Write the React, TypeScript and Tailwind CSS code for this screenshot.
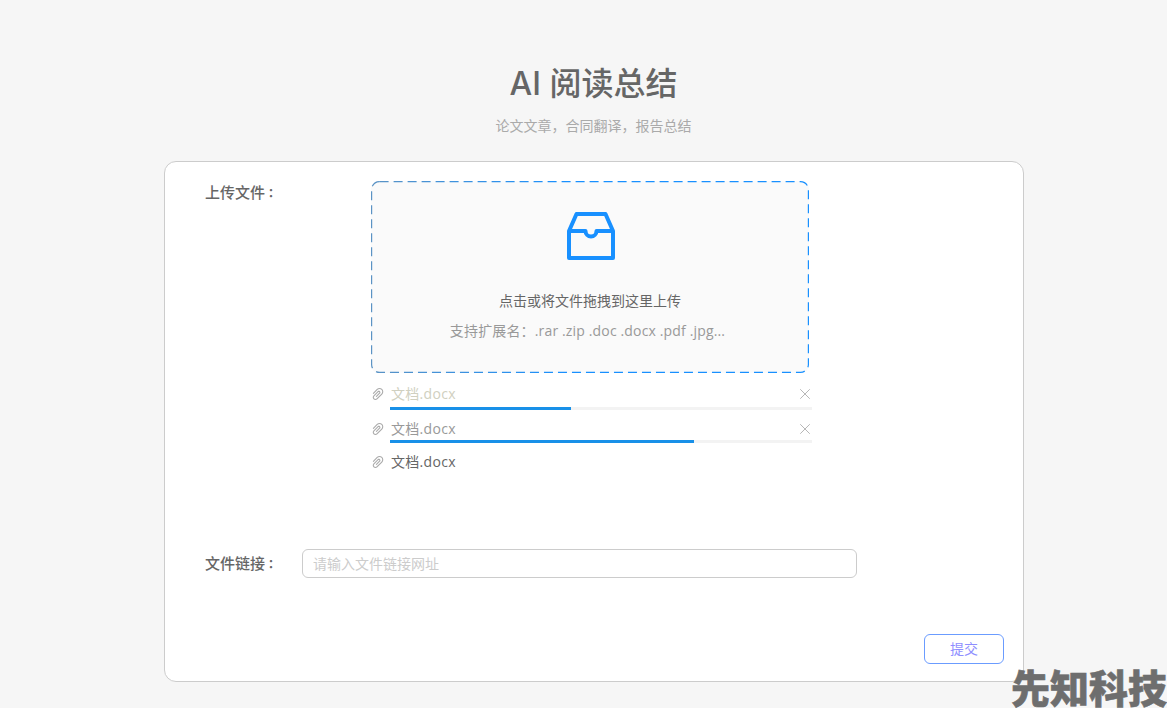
import { X } from "lucide-react";

function ClipIcon() {
  return (
    <svg viewBox="64 64 896 896" className="w-3.5 h-3.5 text-[#aaaaaa] shrink-0" fill="currentColor">
      <path d="M779.3 196.6c-94.2-94.2-247.6-94.2-341.7 0l-261 260.8c-1.7 1.7-2.6 4-2.6 6.4s.9 4.7 2.6 6.4l36.9 36.9a9 9 0 0012.7 0l261-260.8c32.4-32.4 75.5-50.2 121.3-50.2s88.9 17.8 121.2 50.2c32.4 32.4 50.2 75.5 50.2 121.2 0 45.8-17.8 88.8-50.2 121.2l-266 265.9-43.1 43.1c-40.3 40.3-105.8 40.3-146.1 0-19.5-19.5-30.2-45.4-30.2-73s10.7-53.5 30.2-73l263.9-263.8c6.7-6.6 15.5-10.3 24.9-10.3h.1c9.4 0 18.1 3.7 24.7 10.3 6.7 6.7 10.3 15.5 10.3 24.9 0 9.3-3.7 18.1-10.3 24.7L372.4 653c-1.7 1.7-2.6 4-2.6 6.4s.9 4.7 2.6 6.4l36.9 36.9a9 9 0 0012.7 0l215.6-215.6c19.9-19.9 30.8-46.3 30.8-74.4s-11-54.6-30.8-74.4c-41.1-41.1-107.9-41-149 0L463 364 224.8 602.1A172.22 172.22 0 00174 724.8c0 46.3 18.1 89.8 50.8 122.5 33.9 33.8 78.3 50.7 122.7 50.7 44.4 0 88.8-16.9 122.6-50.7l309.2-309C824.8 492.7 850 432 850 367.5c.1-64.6-25.1-125.3-70.7-170.9z" />
    </svg>
  );
}

function InboxIcon() {
  return (
    <svg viewBox="0 0 48 48" className="w-12 h-12 ml-[2px] text-[#1890ff]" fill="none" stroke="currentColor" strokeWidth="4" strokeLinejoin="round">
      <path d="M9.5 2h29L46 19v27H2V19z" />
      <path d="M2 19h16.5a5.5 5.5 0 0 0 11 0H46" />
    </svg>
  );
}

// dashed outline of the drop zone, css dashed can't give these dash lengths
function DashedOutline() {
  return (
    <svg className="absolute inset-0 w-full h-full" fill="none">
      <defs>
        <linearGradient id="dash" x1="0" y1="0" x2="1" y2="0">
          <stop offset="0" stopColor="#5b93c4" />
          <stop offset="0.45" stopColor="#1890ff" />
          <stop offset="1" stopColor="#1890ff" />
        </linearGradient>
      </defs>
      <rect x="0.6" y="0.6" width="436.8" height="190.8" rx="8" stroke="url(#dash)" strokeWidth="1.2" strokeDasharray="9 5" />
    </svg>
  );
}

function FileRow({ color, progress, barGap = 3 }: { color: string; progress?: number; barGap?: number }) {
  return (
    <div className="flex flex-col">
      <div className="flex items-center h-5">
        <ClipIcon />
        <span className={`ml-[6px] text-sm tracking-[0.3px] ${color}`}>文档.docx</span>
        {progress !== undefined && <X className="ml-auto mr-[-2px] w-[18px] h-[18px] text-[#b5b5b5]" strokeWidth={1.3} />}
      </div>
      {progress !== undefined && (
        <div className="ml-[19px] h-[3px] bg-[#f3f3f3]" style={{ marginTop: barGap }}>
          <div className="h-full bg-[#1890e8]" style={{ width: `${progress}%` }}></div>
        </div>
      )}
    </div>
  );
}

function Label({ text, className }: { text: string; className: string }) {
  return (
    <label className={`${className} text-[15px] leading-[22px] font-medium text-[#666666]`}>
      {text}
      <span className="text-xs font-bold font-['Noto_Sans_CJK_TC',sans-serif]">：</span>
    </label>
  );
}

export default function App() {
  return (
    <div className="relative h-[708px] overflow-hidden bg-[#f6f6f6] font-['Open_Sans','Noto_Sans_CJK_SC',sans-serif]">
      <div className="flex flex-col items-center pt-[63px] pl-5">
        <h1 className="text-[32px] leading-[42px] font-medium text-[#666666] font-['Inter','Noto_Sans_CJK_SC',sans-serif]">AI 阅读总结</h1>
        <p className="mt-[11px] text-sm leading-5 text-[#aaaaaa]">论文文章，合同翻译，报告总结</p>
      </div>

      <div className="mx-[164px] mt-[25px] w-[860px] h-[521px] flex flex-col bg-white border border-[#cccccc] rounded-xl pl-10 pr-[19px] pt-[19px] pb-[17px]">
        <div className="flex">
          <Label text="上传文件" className="w-[166px]" />
          <div className="w-[441px]">
            <div className="relative w-[438px] h-[192px] flex flex-col items-center bg-[#fafafa] rounded-lg pt-[31px]">
              <DashedOutline />
              <InboxIcon />
              <p className="mt-[31px] text-sm leading-5 text-[#666666]">点击或将文件拖拽到这里上传</p>
              <p className="mt-[10px] mr-[5px] text-sm leading-5 tracking-[0.15px] text-[#999999]">支持扩展名：.rar .zip .doc .docx .pdf .jpg...</p>
            </div>
            <div className="mt-[11px] space-y-[9px]">
              <FileRow color="text-[#d0d0c0]" progress={43} />
              <FileRow color="text-[#999999]" progress={72} barGap={1} />
              <FileRow color="text-[#666666]" />
            </div>
          </div>
        </div>

        <div className="flex items-center mt-[77px]">
          <Label text="文件链接" className="w-[97px] -mt-[2px]" />
          <input
            placeholder="请输入文件链接网址"
            className="w-[555px] h-[29px] px-[10px] text-sm bg-white border border-[#cccccc] rounded-md outline-none placeholder:text-[#cccccc]"
          />
        </div>

        <div className="flex justify-end mt-auto">
          <button className="w-20 h-[30px] text-sm text-[#8f8fff] bg-white border border-[#6b9cff] rounded-md">提交</button>
        </div>
      </div>

      <div className="absolute right-0 bottom-[1px] text-[39px] leading-[39px] font-black text-[#6e6e6e] whitespace-nowrap [-webkit-text-stroke:0.6px_#6e6e6e]">先知科技</div>
    </div>
  );
}
